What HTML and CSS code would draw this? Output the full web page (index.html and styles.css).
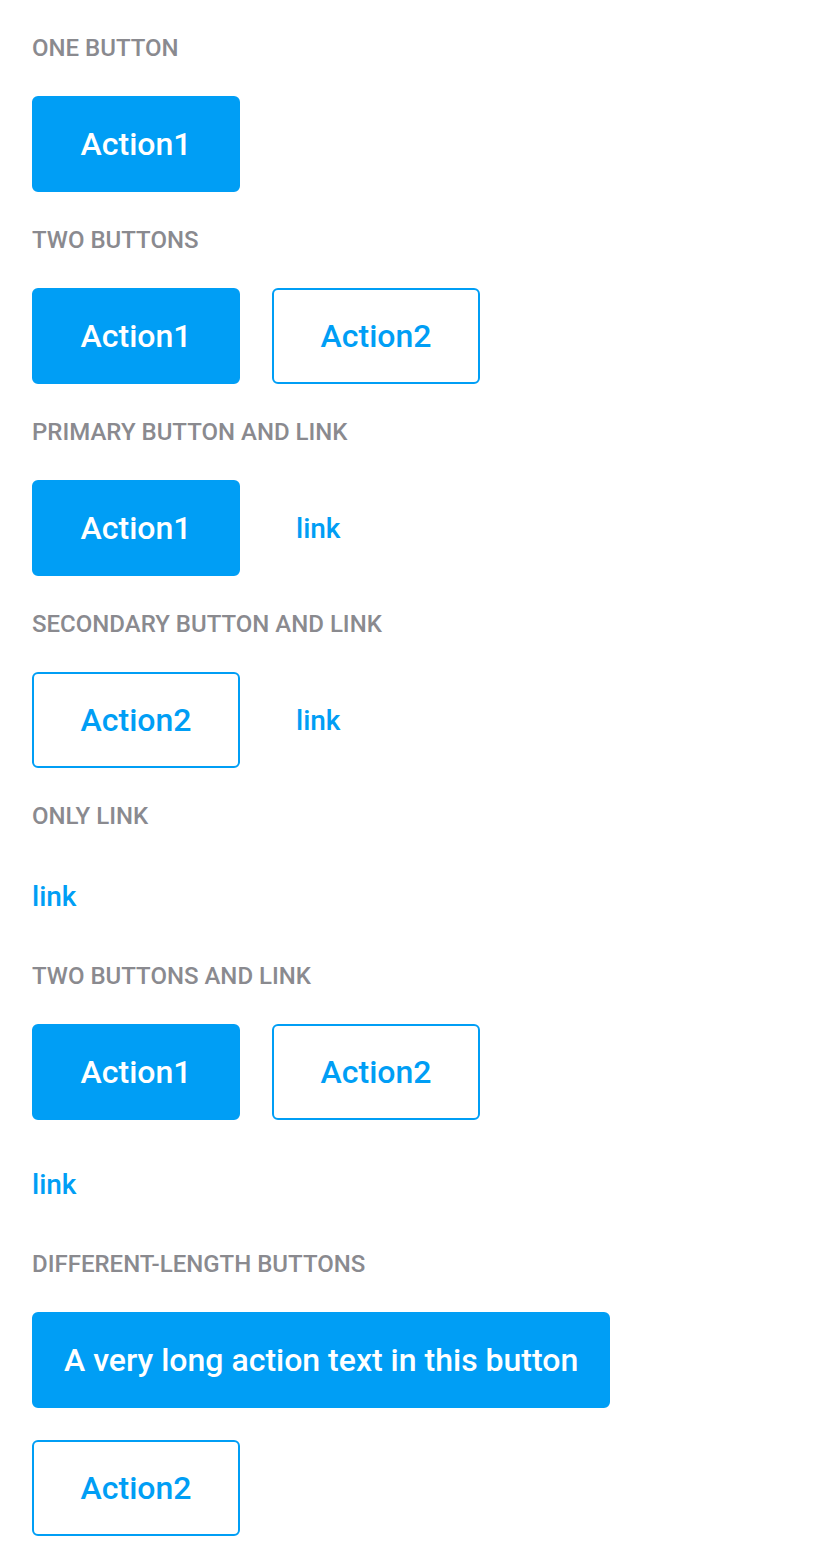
FILE: index.html
```html
<!DOCTYPE html>
<html>
<head>
<meta charset="utf-8">
<link rel="stylesheet" href="styles.css">
</head>
<body>
<main class="page">
  <section class="section">
    <h2 class="title">ONE BUTTON</h2>
    <div class="row">
      <button class="btn btn-primary">Action1</button>
    </div>
  </section>
  <section class="section">
    <h2 class="title">TWO BUTTONS</h2>
    <div class="row">
      <button class="btn btn-primary">Action1</button>
      <button class="btn btn-secondary">Action2</button>
    </div>
  </section>
  <section class="section">
    <h2 class="title">PRIMARY BUTTON AND LINK</h2>
    <div class="row">
      <button class="btn btn-primary">Action1</button>
      <a class="link link-inline" href="#">link</a>
    </div>
  </section>
  <section class="section">
    <h2 class="title">SECONDARY BUTTON AND LINK</h2>
    <div class="row">
      <button class="btn btn-secondary">Action2</button>
      <a class="link link-inline" href="#">link</a>
    </div>
  </section>
  <section class="section">
    <h2 class="title">ONLY LINK</h2>
    <div class="row">
      <a class="link" href="#">link</a>
    </div>
  </section>
  <section class="section">
    <h2 class="title">TWO BUTTONS AND LINK</h2>
    <div class="row">
      <button class="btn btn-primary">Action1</button>
      <button class="btn btn-secondary">Action2</button>
    </div>
    <div class="row">
      <a class="link" href="#">link</a>
    </div>
  </section>
  <section class="section">
    <h2 class="title">DIFFERENT-LENGTH BUTTONS</h2>
    <div class="row">
      <button class="btn btn-primary">A very long action text in this button</button>
    </div>
    <div class="row">
      <button class="btn btn-secondary">Action2</button>
    </div>
  </section>
</main>
</body>
</html>
```

FILE: styles.css
```css
* { box-sizing: border-box; }
html, body { margin: 0; padding: 0; background: #ffffff; }
body { font-family: Roboto, "Liberation Sans", sans-serif; }
.page {
  padding: 32px;
  display: flex;
  flex-direction: column;
  gap: 32px;
}
.section {
  display: flex;
  flex-direction: column;
  gap: 32px;
}
.title {
  margin: 0;
  height: 32px;
  line-height: 32px;
  font-size: 24px;
  font-weight: 500;
  color: #8a8a8f;
}
.row {
  display: flex;
  align-items: center;
  gap: 32px;
}
.btn {
  min-width: 208px;
  height: 96px;
  padding: 0 30px;
  border-radius: 6px;
  font-family: Roboto, "Liberation Sans", sans-serif;
  font-size: 32px;
  font-weight: 500;
  cursor: pointer;
}
.btn-primary {
  background: #009ef5;
  border: 2px solid #009ef5;
  color: #ffffff;
}
.btn-secondary {
  background: #ffffff;
  border: 2px solid #009ef5;
  color: #009ef5;
}
.link {
  display: flex;
  align-items: center;
  height: 64px;
  font-size: 28px;
  font-weight: 500;
  color: #009ef5;
  text-decoration: none;
}
.link-inline {
  padding: 0 24px;
}
```
